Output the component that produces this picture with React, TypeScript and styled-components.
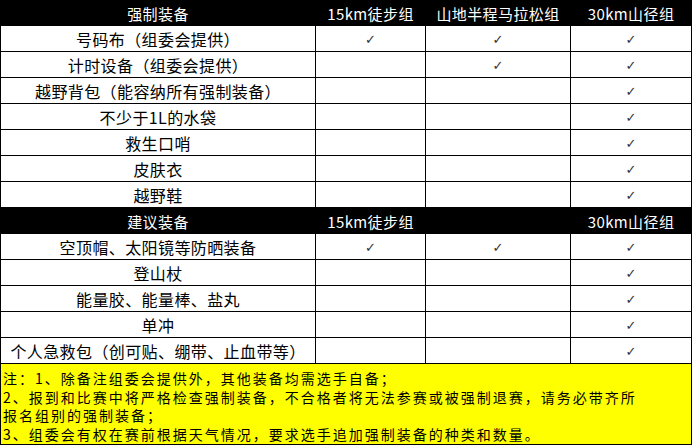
import React from "react";
import styled, { createGlobalStyle } from "styled-components";

const GlobalStyle = createGlobalStyle`
	html, body {
		margin: 0;
		padding: 0;
		background: #ffffff;
	}
	body {
		font-family: "Noto Sans CJK SC", sans-serif;
	}
	* {
		box-sizing: border-box;
	}
`;

const Sheet = styled.div`
	width: 692px;
	border-left: 1px solid #000;
	border-bottom: 1px solid #000;
`;

const Row = styled.div<{ $head?: boolean }>`
	display: grid;
	grid-template-columns: 315px 110px 145px 121px;
	height: 26px;
	background: ${({ $head }) => ($head ? "#000" : "#fff")};
	color: ${({ $head }) => ($head ? "#fff" : "#000")};
`;

const Cell = styled.div<{ $check?: boolean; $head?: boolean }>`
	display: flex;
	align-items: center;
	justify-content: center;
	border-right: 1px solid #000;
	border-bottom: 1px solid #000;
	white-space: nowrap;
	font-family: ${({ $check }) =>
		$check ? '"DejaVu Sans", sans-serif' : '"Noto Sans CJK SC", sans-serif'};
	font-size: ${({ $check, $head }) => ($check ? "13px" : $head ? "15px" : "16px")};
	letter-spacing: ${({ $check }) => ($check ? "0" : "0.4px")};
	color: ${({ $check }) => ($check ? "#333" : "inherit")};
	padding-top: 1px;
`;

const Note = styled.div`
	height: 80px;
	overflow: hidden;
	background: #ffff00;
	border-right: 1px solid #000;
	padding: 5px 0 0 2px;
	font-size: 14px;
	letter-spacing: 2px;
	color: #000;
`;

const NoteLine = styled.div`
	height: 18.7px;
	line-height: 18.7px;
	white-space: nowrap;
`;

type Item = [string, boolean, boolean, boolean];

const required: Item[] = [
	["号码布（组委会提供）", true, true, true],
	["计时设备（组委会提供）", false, true, true],
	["越野背包（能容纳所有强制装备）", false, false, true],
	["不少于1L的水袋", false, false, true],
	["救生口哨", false, false, true],
	["皮肤衣", false, false, true],
	["越野鞋", false, false, true],
];

const suggested: Item[] = [
	["空顶帽、太阳镜等防晒装备", true, true, true],
	["登山杖", false, false, true],
	["能量胶、能量棒、盐丸", false, false, true],
	["单冲", false, false, true],
	["个人急救包（创可贴、绷带、止血带等）", false, false, true],
];

const notes = [
	"注：1、除备注组委会提供外，其他装备均需选手自备；",
	"2、报到和比赛中将严格检查强制装备，不合格者将无法参赛或被强制退赛，请务必带齐所",
	"报名组别的强制装备；",
	"3、组委会有权在赛前根据天气情况，要求选手追加强制装备的种类和数量。",
];

const Head: React.FC<{ labels: string[] }> = ({ labels }) => (
	<Row $head>
		{labels.map((label, i) => (
			<Cell $head key={i}>
				{label}
			</Cell>
		))}
	</Row>
);

const renderRows = (rows: Item[]) =>
	rows.map(([name, a, b, c]) => (
		<Row key={name}>
			<Cell>{name}</Cell>
			<Cell $check>{a ? "✓" : ""}</Cell>
			<Cell $check>{b ? "✓" : ""}</Cell>
			<Cell $check>{c ? "✓" : ""}</Cell>
		</Row>
	));

const App: React.FC = () => {
	return (
		<>
			<GlobalStyle />
			<Sheet>
				<Head labels={["强制装备", "15km徒步组", "山地半程马拉松组", "30km山径组"]} />
				{renderRows(required)}
				<Head labels={["建议装备", "15km徒步组", "", "30km山径组"]} />
				{renderRows(suggested)}
				<Note>
					{notes.map((line) => (
						<NoteLine key={line}>{line}</NoteLine>
					))}
				</Note>
			</Sheet>
		</>
	);
};

export default App;
